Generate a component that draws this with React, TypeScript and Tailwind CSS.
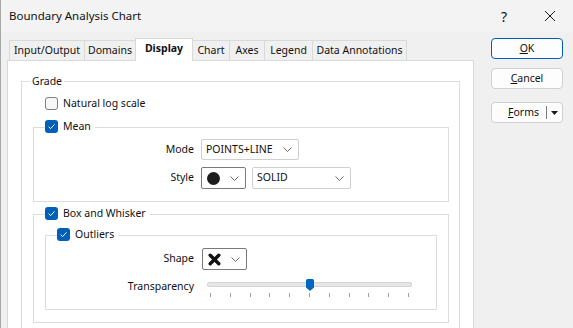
import React from 'react';

function Check({ checked }: { checked?: boolean }) {
  if (checked) {
    return (
      <span className="flex h-[13px] w-[13px] shrink-0 items-center justify-center rounded-[3px] bg-[#005fb8]">
        <svg width="9" height="9" viewBox="0 0 9 9">
          <path d="M1.6 4.7 L3.6 6.6 L7.5 2.4" fill="none" stroke="#ffffff" strokeWidth="1" />
        </svg>
      </span>
    );
  }
  return <span className="h-[13px] w-[13px] shrink-0 rounded-[3px] border border-[#7f7f7f] bg-[#f7f7f7]" />;
}

function Chevron() {
  return (
    <svg width="9" height="5" viewBox="0 0 9 5" className="shrink-0">
      <path d="M0.5 0.5 L4.5 4.5 L8.5 0.5" fill="none" stroke="#6b6b6b" strokeWidth="1" />
    </svg>
  );
}

function Combo({ className, children }: { className: string; children: React.ReactNode }) {
  return (
    <div className={`flex items-center justify-between rounded-[2px] border bg-white pl-[4px] pr-[6px] ${className}`}>
      <div className="flex items-center">{children}</div>
      <Chevron />
    </div>
  );
}

const tabs = [
  { label: 'Input/Output', w: 'w-[76px]' },
  { label: 'Domains', w: 'w-[52px]' },
  { label: 'Display', w: 'w-[58px]', active: true },
  { label: 'Chart', w: 'w-[38px]' },
  { label: 'Axes', w: 'w-[36px]' },
  { label: 'Legend', w: 'w-[49px]' },
  { label: 'Data Annotations', w: 'w-[95px]' },
];

export default function App() {
  return (
    <div className="flex h-[328px] w-[573px] flex-col overflow-hidden border-l border-[#a8a8a8] bg-[#f0f0f0] font-['Noto_Sans',sans-serif] text-[10.5px] text-[#111]">
      {/* title bar */}
      <div className="flex h-[32px] shrink-0 items-center bg-[#f3f3f3]">
        <div className="flex-1 pl-[8px] text-[11.5px]">Boundary Analysis Chart</div>
        <div className="flex h-full w-[46px] items-center justify-center text-[14px]">?</div>
        <div className="flex h-full w-[46px] items-center justify-center">
          <svg width="12" height="12" viewBox="0 0 12 12">
            <path d="M1 1 L11 11 M11 1 L1 11" stroke="#1a1a1a" strokeWidth="1" />
          </svg>
        </div>
      </div>

      <div className="flex flex-1">
        {/* left: tabs */}
        <div className="flex flex-col pl-[6px] pt-[6px]">
          <div className="flex h-[22px] items-end pl-[2px]">
            {tabs.map((t, i) => (
              <div
                key={t.label}
                className={`${t.w} ${i > 0 ? '-ml-px' : ''} flex items-center justify-center border-x border-t border-[#d9d9d9] ${
                  t.active ? 'relative z-10 -mb-px h-[23px] bg-white pb-[2px] font-bold' : 'h-[20px] bg-[#f0f0f0]'
                }`}
              >
                {t.label}
              </div>
            ))}
          </div>
          <div className="flex h-[280px] w-[467px] flex-col border border-[#d9d9d9] bg-white">
            {/* Grade */}
            <div className="ml-[13px] mt-[20px] flex h-[260px] w-[439px] flex-col border border-[#dcdcdc]">
              <div className="-mt-[8px] ml-[8px] h-[14px] self-start bg-white px-[2px] leading-[14px]">Grade</div>
              <div className="ml-[23px] mt-[9px] flex h-[13px] items-center gap-[5px]">
                <Check />
                <span>Natural log scale</span>
              </div>

              {/* Mean */}
              <div className="ml-[11px] mt-[17px] flex h-[75px] w-[416px] flex-col border border-[#dcdcdc]">
                <div className="-mt-[8px] ml-[11px] flex h-[13px] items-center gap-[5px] self-start bg-white pr-[4px]">
                  <Check checked />
                  <span>Mean</span>
                </div>
                <div className="mt-[6px] flex h-[21px] items-center">
                  <div className="w-[160px] text-right">Mode</div>
                  <Combo className="ml-[7px] h-[21px] w-[98px] border-[#cfcfcf]">
                    <span>POINTS+LINE</span>
                  </Combo>
                </div>
                <div className="mt-[7px] flex h-[22px] items-center">
                  <div className="w-[160px] text-right">Style</div>
                  <Combo className="ml-[7px] h-[22px] w-[45px] border-[#7a7a7a]">
                    <span className="ml-[1px] h-[13px] w-[13px] rounded-full bg-[#1c1c1c]" />
                  </Combo>
                  <Combo className="ml-[6px] h-[22px] w-[99px] border-[#cfcfcf]">
                    <span>SOLID</span>
                  </Combo>
                </div>
              </div>

              {/* Box and Whisker */}
              <div className="ml-[11px] mt-[12px] flex h-[109px] w-[416px] flex-col border border-[#dcdcdc]">
                <div className="-mt-[8px] ml-[11px] flex h-[13px] items-center gap-[5px] self-start bg-white pr-[4px]">
                  <Check checked />
                  <span>Box and Whisker</span>
                </div>

                {/* Outliers */}
                <div className="ml-[11px] mt-[15px] flex h-[75px] w-[392px] flex-col border border-[#dcdcdc]">
                  <div className="-mt-[8px] ml-[11px] flex h-[13px] items-center gap-[5px] self-start bg-white pr-[4px]">
                    <Check checked />
                    <span>Outliers</span>
                  </div>
                  <div className="mt-[7px] flex h-[22px] items-center">
                    <div className="w-[148px] text-right">Shape</div>
                    <Combo className="ml-[8px] h-[22px] w-[45px] border-[#7a7a7a]">
                      <svg width="13" height="13" viewBox="0 0 13 13" className="ml-[1px]">
                        <path d="M2.2 2.2 L10.8 10.8 M10.8 2.2 L2.2 10.8" stroke="#111" strokeWidth="3.4" strokeLinecap="round" />
                      </svg>
                    </Combo>
                  </div>
                  <div className="mt-[8px] flex">
                    <div className="h-[16px] w-[148px] text-right leading-[16px]">Transparency</div>
                    <div className="relative ml-[13px] w-[205px]">
                      <div className="mt-[4px] h-[5px] rounded-[2px] border border-[#d4d4d4] bg-[#e6e6e6]" />
                      <div className="mt-[6px] flex justify-between px-[3px]">
                        {Array.from({ length: 11 }).map((_, i) => (
                          <span key={i} className="h-[4px] w-px bg-[#a0a0a0]" />
                        ))}
                      </div>
                      <svg width="8" height="12" viewBox="0 0 8 12" className="absolute left-[99px] top-[1px]">
                        <path d="M0 1.5 Q0 0 1.5 0 H6.5 Q8 0 8 1.5 V8.5 L4 12 L0 8.5 Z" fill="#0067c0" />
                      </svg>
                    </div>
                  </div>
                </div>
              </div>
            </div>
          </div>
        </div>

        {/* right: buttons */}
        <div className="ml-[17px] flex flex-col pt-[6px]">
          <div className="flex h-[21px] w-[72px] items-center justify-center rounded-[4px] border border-[#005fb8] bg-[#fdfdfd]">
            <span><span className="underline">O</span>K</span>
          </div>
          <div className="mt-[9px] flex h-[21px] w-[72px] items-center justify-center rounded-[4px] border border-[#d0d0d0] bg-[#fdfdfd]">
            <span><span className="underline">C</span>ancel</span>
          </div>
          <div className="mt-[13px] flex h-[21px] w-[72px] items-center rounded-[4px] border border-[#d0d0d0] bg-[#fdfdfd]">
            <div className="flex flex-1 justify-end pr-[7px]">
              <span><span className="underline">F</span>orms</span>
            </div>
            <span className="h-[13px] w-px bg-[#7a7a7a]" />
            <div className="flex w-[15px] justify-center">
              <svg width="7" height="4" viewBox="0 0 7 4">
                <path d="M0 0 H7 L3.5 4 Z" fill="#1a1a1a" />
              </svg>
            </div>
          </div>
        </div>
      </div>
    </div>
  );
}
